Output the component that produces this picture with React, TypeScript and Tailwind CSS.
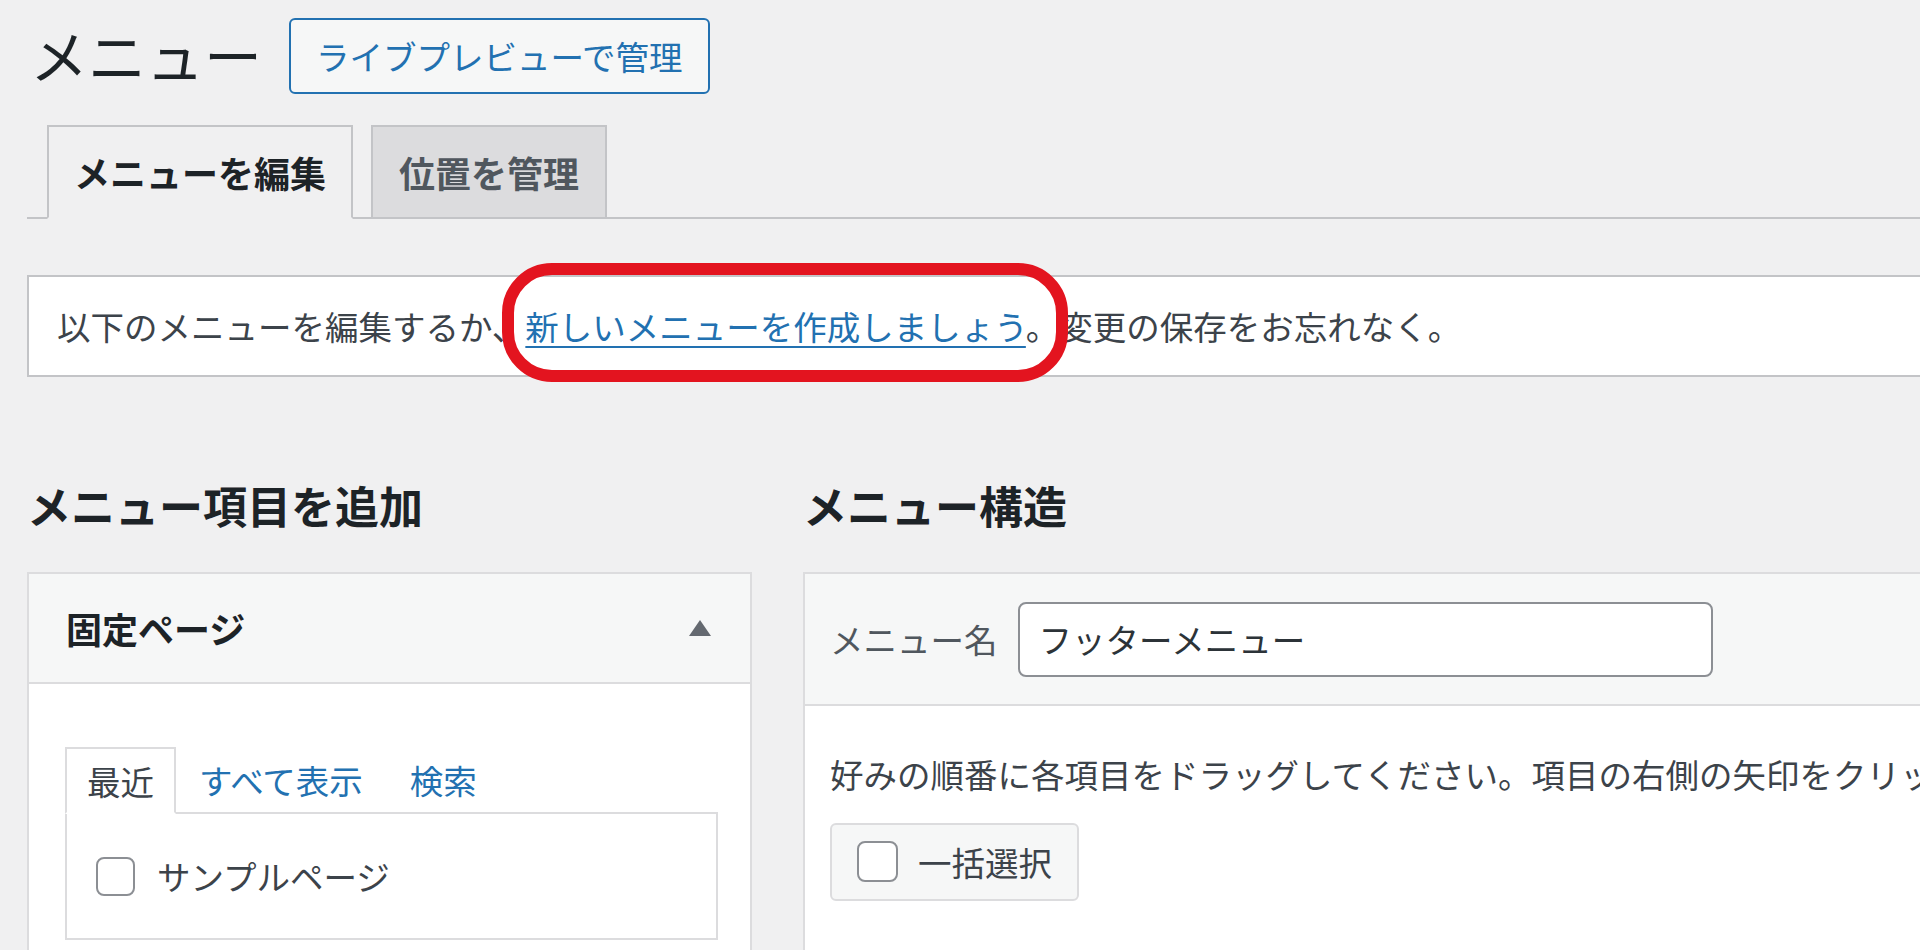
export default function App() {
  return (
    <div className="w-[1920px] h-[950px] overflow-hidden bg-[#f0f0f1] text-[#3c434a] font-['Noto_Sans_CJK_JP',sans-serif] pl-[27px]">
      {/* ページタイトル */}
      <div className="flex items-center h-[76px] mt-[18px]">
        <h1 className="ml-[3px] -mt-[4px] text-[58px] leading-none font-normal text-[#1d2327]">メニュー</h1>
        <button className="ml-[27px] h-[76px] px-[25px] border-2 border-[#2271b1] rounded-[6px] bg-[#f6f7f7] text-[#2271b1] text-[33.5px] leading-none">
          ライブプレビューで管理
        </button>
      </div>

      {/* タブ */}
      <div className="mt-[31px] flex items-end gap-[18px] pl-[20px] border-b-2 border-[#c3c4c7] w-[1893px]">
        <div className="-mb-[2px] h-[94px] px-[25px] flex items-center border-2 border-[#c3c4c7] border-b-[#f0f0f1] bg-[#f0f0f1] text-[36px] leading-none font-bold text-[#1d2327]">
          メニューを編集
        </div>
        <div className="-mb-[2px] h-[94px] px-[26px] flex items-center border-2 border-[#c3c4c7] bg-[#dcdcde] text-[36px] leading-none font-bold text-[#50575e]">
          位置を管理
        </div>
      </div>

      {/* お知らせ */}
      <div className="relative mt-[56px] h-[102px] w-[1900px] bg-white border-2 border-[#c3c4c7] flex items-center pl-[28px] text-[33.5px] leading-none">
        <p>
          以下のメニューを編集するか、
          <a href="#" className="text-[#2271b1] underline underline-offset-[6px] decoration-[1.5px]">新しいメニューを作成しましょう</a>
          。変更の保存をお忘れなく。
        </p>
        <svg className="absolute left-[473px] -top-[14px]" width="566" height="119" viewBox="0 0 566 119">
          <rect x="6" y="6" width="554" height="107" rx="44" ry="44" fill="none" stroke="#e3141f" strokeWidth="12" />
        </svg>
      </div>

      <div className="mt-[106px] flex gap-[51px]">
        {/* メニュー項目を追加 */}
        <div className="w-[725px] shrink-0">
          <h2 className="text-[44px] leading-none font-bold text-[#1d2327]">メニュー項目を追加</h2>
          <div className="mt-[45px] border-2 border-[#dcdcde] bg-white h-[400px]">
            <div className="h-[110px] bg-[#f6f7f7] border-b-2 border-[#dcdcde] flex items-center justify-between pl-[37px] pr-[39px]">
              <span className="text-[36px] leading-none font-bold text-[#1d2327]">固定ページ</span>
              <svg width="22" height="16" viewBox="0 0 22 16">
                <polygon points="11,0 22,16 0,16" fill="#646970" />
              </svg>
            </div>
            <div className="pt-[63px] pl-[36px]">
              <div className="flex items-end text-[33.5px] leading-none">
                <div className="-mb-[2px] h-[67px] px-[20px] flex items-center border-2 border-[#dcdcde] border-b-white bg-white text-[#3c434a]">
                  最近
                </div>
                <a href="#" className="ml-[23px] h-[65px] flex items-center text-[#2271b1]">すべて表示</a>
                <a href="#" className="ml-[47px] h-[65px] flex items-center text-[#2271b1]">検索</a>
              </div>
              <div className="w-[653px] h-[128px] border-2 border-[#dcdcde] flex items-center pl-[29px]">
                <span className="w-[39px] h-[39px] border-2 border-[#8c8f94] rounded-[8px] bg-white" />
                <span className="ml-[22px] text-[33.5px] leading-none">サンプルページ</span>
              </div>
            </div>
          </div>
        </div>

        {/* メニュー構造 */}
        <div className="w-[1300px] shrink-0">
          <h2 className="text-[44px] leading-none font-bold text-[#1d2327]">メニュー構造</h2>
          <div className="mt-[45px] border-2 border-[#dcdcde] bg-white h-[400px]">
            <div className="h-[132px] bg-[#f6f7f7] border-b-2 border-[#dcdcde] flex items-center pl-[25px]">
              <label className="text-[33.5px] leading-none text-[#50575e]">メニュー名</label>
              <div className="ml-[20px] w-[695px] h-[75px] border-2 border-[#8c8f94] rounded-[8px] bg-white flex items-center pl-[19px] text-[33.5px] leading-none text-[#2c3338]">
                フッターメニュー
              </div>
            </div>
            <div className="pt-[51px] pl-[25px]">
              <p className="text-[33.5px] leading-none whitespace-nowrap">
                好みの順番に各項目をドラッグしてください。項目の右側の矢印をクリックすると、追加の設定オプションが表示されます。
              </p>
              <div className="mt-[32px] w-[249px] h-[78px] border-2 border-[#dcdcde] rounded-[6px] bg-[#f6f7f7] flex items-center pl-[25px]">
                <span className="w-[41px] h-[41px] border-2 border-[#8c8f94] rounded-[8px] bg-white" />
                <span className="ml-[20px] text-[33.5px] leading-none">一括選択</span>
              </div>
            </div>
          </div>
        </div>
      </div>
    </div>
  )
}
